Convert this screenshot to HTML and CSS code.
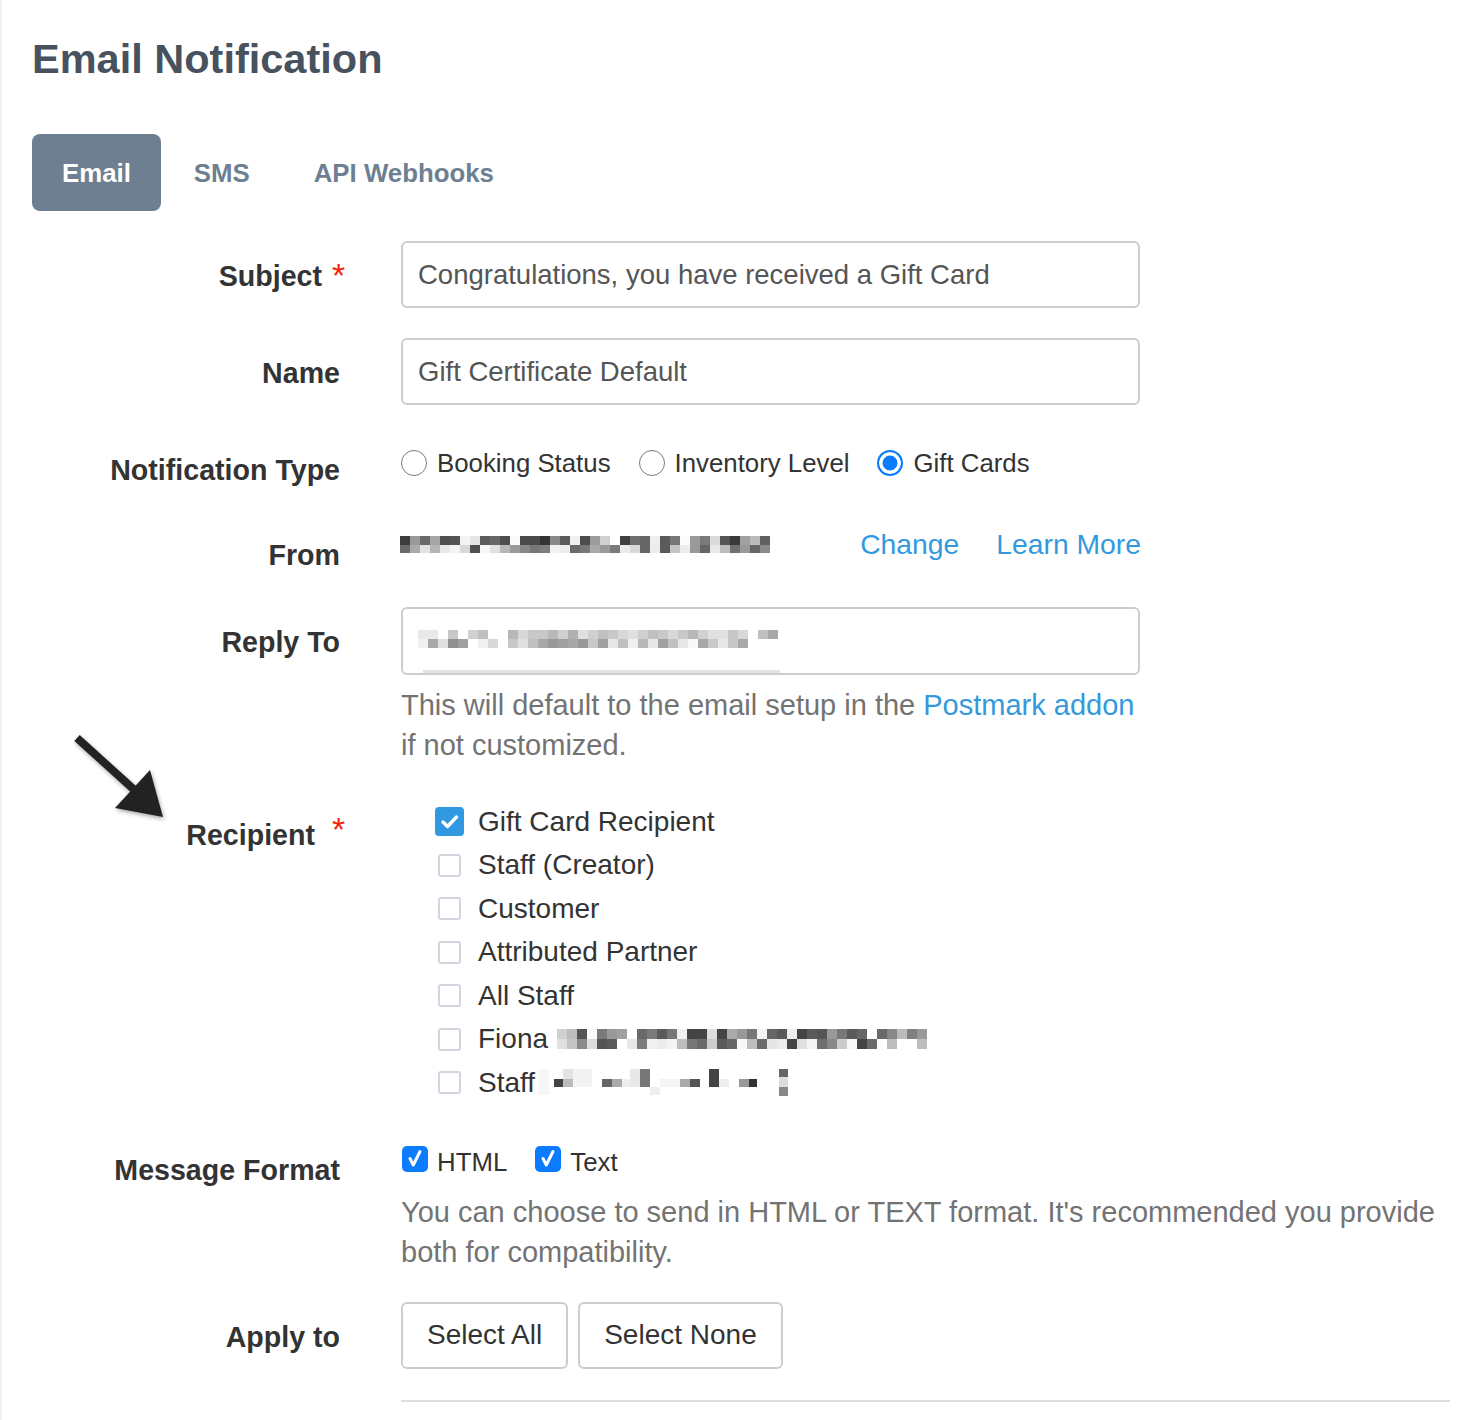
FILE: index.html
```html
<!DOCTYPE html>
<html lang="en">
<head>
<meta charset="utf-8">
<title>Email Notification</title>
<link rel="stylesheet" href="styles.css">
</head>
<body>
<div class="page">
  <h1 class="title">Email Notification</h1>

  <nav class="tabs">
    <a class="tab active">Email</a>
    <a class="tab">SMS</a>
    <a class="tab">API Webhooks</a>
  </nav>

  <svg class="arrow" width="120" height="105" viewBox="0 0 120 105">
    <line x1="17" y1="13" x2="80" y2="70" stroke="#222" stroke-width="8"/>
    <polygon points="90,45 55,83 103,92" fill="#222"/>
  </svg>

  <form class="form">
    <div class="row">
      <label class="lbl req-subject">Subject<span class="star">*</span></label>
      <div class="ctl"><input class="input" type="text" value="Congratulations, you have received a Gift Card"></div>
    </div>

    <div class="row">
      <label class="lbl">Name</label>
      <div class="ctl"><input class="input" type="text" value="Gift Certificate Default"></div>
    </div>

    <div class="row">
      <label class="lbl">Notification Type</label>
      <div class="ctl radios">
        <span class="opt"><span class="rad"></span>Booking Status</span>
        <span class="opt"><span class="rad"></span>Inventory Level</span>
        <span class="opt"><span class="rad on"></span>Gift Cards</span>
      </div>
    </div>

    <div class="row row-from">
      <label class="lbl">From</label>
      <div class="ctl from">
        <svg class="blur blur-from" width="370" height="17" shape-rendering="crispEdges">
          <g>
            <rect x="0" fill="#3d3d3d"/><rect x="10" fill="#9a9a9a"/><rect x="20" fill="#6a6a6a"/><rect x="30" fill="#a5a5a5"/><rect x="40" fill="#505050"/><rect x="50" fill="#555"/><rect x="60" fill="#f4f4f4"/><rect x="70" fill="#e6e6e6"/><rect x="80" fill="#5c5c5c"/><rect x="90" fill="#666"/><rect x="100" fill="#4e4e4e"/><rect x="110" fill="#fafafa"/><rect x="120" fill="#4a4a4a"/><rect x="130" fill="#4a4a4a"/><rect x="140" fill="#333"/><rect x="150" fill="#8a8a8a"/><rect x="160" fill="#5a5a5a"/><rect x="170" fill="#f0f0f0"/><rect x="180" fill="#4d4d4d"/><rect x="190" fill="#9c9c9c"/><rect x="200" fill="#d0d0d0"/><rect x="210" fill="#fff"/><rect x="220" fill="#3f3f3f"/><rect x="230" fill="#707070"/><rect x="240" fill="#666"/><rect x="250" fill="#eee"/><rect x="260" fill="#5a5a5a"/><rect x="270" fill="#777"/><rect x="280" fill="#fbfbfb"/><rect x="290" fill="#9a9a9a"/><rect x="300" fill="#7a7a7a"/><rect x="310" fill="#dadada"/><rect x="320" fill="#555"/><rect x="330" fill="#3a3a3a"/><rect x="340" fill="#a0a0a0"/><rect x="350" fill="#bbb"/><rect x="360" fill="#606060"/>
          </g>
          <g transform="translate(0,9)">
            <rect x="0" fill="#6a6a6a"/><rect x="10" fill="#a9a9a9"/><rect x="20" fill="#e2e2e2"/><rect x="30" fill="#b5b5b5"/><rect x="40" fill="#e8e8e8"/><rect x="50" fill="#f4f4f4"/><rect x="60" fill="#d8d8d8"/><rect x="70" fill="#505050"/><rect x="80" fill="#f7f7f7"/><rect x="90" fill="#e0e0e0"/><rect x="100" fill="#b8b8b8"/><rect x="110" fill="#9a9a9a"/><rect x="120" fill="#888"/><rect x="130" fill="#777"/><rect x="140" fill="#7d7d7d"/><rect x="150" fill="#f2f2f2"/><rect x="160" fill="#ededed"/><rect x="170" fill="#6a6a6a"/><rect x="180" fill="#777"/><rect x="190" fill="#aaa"/><rect x="200" fill="#999"/><rect x="210" fill="#7a7a7a"/><rect x="220" fill="#ebebeb"/><rect x="230" fill="#d9d9d9"/><rect x="240" fill="#666"/><rect x="250" fill="#ededed"/><rect x="260" fill="#5a5a5a"/><rect x="270" fill="#c4c4c4"/><rect x="280" fill="#ececec"/><rect x="290" fill="#999"/><rect x="300" fill="#666"/><rect x="310" fill="#e8e8e8"/><rect x="320" fill="#bbb"/><rect x="330" fill="#6f6f6f"/><rect x="340" fill="#999"/><rect x="350" fill="#666"/><rect x="360" fill="#8a8a8a"/>
          </g>
        </svg>
        <span class="links"><a href="#">Change</a><a href="#">Learn More</a></span>
      </div>
    </div>

    <div class="row">
      <label class="lbl">Reply To</label>
      <div class="ctl">
        <div class="input fake">
          <svg class="blur blur-reply" width="360" height="18" shape-rendering="crispEdges">
            <g>
              <rect x="0" fill="#e8e8e8"/><rect x="10" fill="#e8e8e8"/><rect x="20" fill="#fff"/><rect x="30" fill="#c8c8c8"/><rect x="40" fill="#fff"/><rect x="50" fill="#d0d0d0"/><rect x="60" fill="#c0c0c0"/><rect x="70" fill="#fff"/><rect x="80" fill="#fff"/><rect x="90" fill="#b8b8b8"/><rect x="100" fill="#d8d8d8"/><rect x="110" fill="#c8c8c8"/><rect x="120" fill="#c8c8c8"/><rect x="130" fill="#b8b8b8"/><rect x="140" fill="#d0d0d0"/><rect x="150" fill="#b0b0b0"/><rect x="160" fill="#e0e0e0"/><rect x="170" fill="#d0d0d0"/><rect x="180" fill="#c0c0c0"/><rect x="190" fill="#c8c8c8"/><rect x="200" fill="#d8d8d8"/><rect x="210" fill="#e0e0e0"/><rect x="220" fill="#d0d0d0"/><rect x="230" fill="#c0c0c0"/><rect x="240" fill="#c8c8c8"/><rect x="250" fill="#d8d8d8"/><rect x="260" fill="#c8c8c8"/><rect x="270" fill="#b8b8b8"/><rect x="280" fill="#d0d0d0"/><rect x="290" fill="#e0e0e0"/><rect x="300" fill="#e0e0e0"/><rect x="310" fill="#c8c8c8"/><rect x="320" fill="#d8d8d8"/><rect x="330" fill="#fff"/><rect x="340" fill="#c0c0c0"/><rect x="350" fill="#a8a8a8"/>
            </g>
            <g transform="translate(0,9)">
              <rect x="0" fill="#f0f0f0"/><rect x="10" fill="#a8a8a8"/><rect x="20" fill="#e0e0e0"/><rect x="30" fill="#909090"/><rect x="40" fill="#a0a0a0"/><rect x="50" fill="#fff"/><rect x="60" fill="#f0f0f0"/><rect x="70" fill="#d8d8d8"/><rect x="80" fill="#fff"/><rect x="90" fill="#c8c8c8"/><rect x="100" fill="#e0e0e0"/><rect x="110" fill="#c0c0c0"/><rect x="120" fill="#a8a8a8"/><rect x="130" fill="#989898"/><rect x="140" fill="#a0a0a0"/><rect x="150" fill="#a8a8a8"/><rect x="160" fill="#989898"/><rect x="170" fill="#c8c8c8"/><rect x="180" fill="#a0a0a0"/><rect x="190" fill="#e8e8e8"/><rect x="200" fill="#c0c0c0"/><rect x="210" fill="#f0f0f0"/><rect x="220" fill="#b8b8b8"/><rect x="230" fill="#e8e8e8"/><rect x="240" fill="#a0a0a0"/><rect x="250" fill="#c0c0c0"/><rect x="260" fill="#e8e8e8"/><rect x="270" fill="#f8f8f8"/><rect x="280" fill="#a8a8a8"/><rect x="290" fill="#c8c8c8"/><rect x="300" fill="#e8e8e8"/><rect x="310" fill="#c8c8c8"/><rect x="320" fill="#a8a8a8"/><rect x="330" fill="#fff"/><rect x="340" fill="#fff"/><rect x="350" fill="#fff"/>
            </g>
          </svg>
          <span class="autofill-bar"></span>
        </div>
        <p class="help">This will default to the email setup in the <a href="#">Postmark addon</a> if not customized.</p>
      </div>
    </div>

    <div class="row">
      <label class="lbl req-recipient">Recipient<span class="star">*</span></label>
      <div class="ctl checks">
        <div class="citem"><span class="cslot"><span class="cb on"><svg width="29" height="29" viewBox="0 0 29 29"><path d="M8 15 L12.5 19.5 L21.5 10" fill="none" stroke="#fff" stroke-width="3.4" stroke-linecap="round" stroke-linejoin="round"/></svg></span></span>Gift Card Recipient</div>
        <div class="citem"><span class="cslot"><span class="cb"></span></span>Staff (Creator)</div>
        <div class="citem"><span class="cslot"><span class="cb"></span></span>Customer</div>
        <div class="citem"><span class="cslot"><span class="cb"></span></span>Attributed Partner</div>
        <div class="citem"><span class="cslot"><span class="cb"></span></span>All Staff</div>
        <div class="citem"><span class="cslot"><span class="cb"></span></span>Fiona
          <svg class="blur blur-fiona" width="371" height="21" shape-rendering="crispEdges">
            <g>
              <rect x="0" fill="#d0d0d0"/><rect x="10" fill="#bdbdbd"/><rect x="20" fill="#555"/><rect x="30" fill="#f8f8f8"/><rect x="40" fill="#7a7a7a"/><rect x="50" fill="#999"/><rect x="60" fill="#a0a0a0"/><rect x="70" fill="#fff"/><rect x="80" fill="#6a6a6a"/><rect x="90" fill="#7a7a7a"/><rect x="100" fill="#5a5a5a"/><rect x="110" fill="#777"/><rect x="120" fill="#f0f0f0"/><rect x="130" fill="#444"/><rect x="140" fill="#444"/><rect x="150" fill="#ddd"/><rect x="160" fill="#444"/><rect x="170" fill="#aaa"/><rect x="180" fill="#999"/><rect x="190" fill="#777"/><rect x="200" fill="#f4f4f4"/><rect x="210" fill="#666"/><rect x="220" fill="#5a5a5a"/><rect x="230" fill="#eee"/><rect x="240" fill="#444"/><rect x="250" fill="#5a5a5a"/><rect x="260" fill="#555"/><rect x="270" fill="#999"/><rect x="280" fill="#777"/><rect x="290" fill="#5a5a5a"/><rect x="300" fill="#666"/><rect x="310" fill="#fff"/><rect x="320" fill="#6a6a6a"/><rect x="330" fill="#888"/><rect x="340" fill="#bbb"/><rect x="350" fill="#808080"/><rect x="360" fill="#9a9a9a"/>
            </g>
            <g transform="translate(0,10)">
              <rect x="0" fill="#e0e0e0"/><rect x="10" fill="#c4c4c4"/><rect x="20" fill="#8a8a8a"/><rect x="30" fill="#ddd"/><rect x="40" fill="#555"/><rect x="50" fill="#5a5a5a"/><rect x="60" fill="#fff"/><rect x="70" fill="#e8e8e8"/><rect x="80" fill="#7a7a7a"/><rect x="90" fill="#f0f0f0"/><rect x="100" fill="#ececec"/><rect x="110" fill="#f4f4f4"/><rect x="120" fill="#bdbdbd"/><rect x="130" fill="#777"/><rect x="140" fill="#6a6a6a"/><rect x="150" fill="#ccc"/><rect x="160" fill="#5a5a5a"/><rect x="170" fill="#666"/><rect x="180" fill="#f8f8f8"/><rect x="190" fill="#bdbdbd"/><rect x="200" fill="#6a6a6a"/><rect x="210" fill="#e6e6e6"/><rect x="220" fill="#ececec"/><rect x="230" fill="#444"/><rect x="240" fill="#e0e0e0"/><rect x="250" fill="#f4f4f4"/><rect x="260" fill="#6f6f6f"/><rect x="270" fill="#888"/><rect x="280" fill="#ccc"/><rect x="290" fill="#f8f8f8"/><rect x="300" fill="#444"/><rect x="310" fill="#6a6a6a"/><rect x="320" fill="#fff"/><rect x="330" fill="#bdbdbd"/><rect x="340" fill="#fff"/><rect x="350" fill="#fff"/><rect x="360" fill="#bdbdbd"/>
            </g>
          </svg>
        </div>
        <div class="citem"><span class="cslot"><span class="cb"></span></span>Staff
          <svg class="blur-staff" width="252" height="28" shape-rendering="crispEdges">
            <rect x="2" y="0" width="10" height="26" fill="#f6f6f6"/>
            <rect x="17" y="10" width="9" height="8" fill="#444"/>
            <rect x="26" y="0" width="10" height="10" fill="#e4e4e4"/>
            <rect x="26" y="10" width="10" height="8" fill="#bbb"/>
            <rect x="36" y="0" width="19" height="18" fill="#f2f2f2"/>
            <rect x="65" y="10" width="10" height="8" fill="#666"/>
            <rect x="75" y="10" width="10" height="8" fill="#aaa"/>
            <rect x="85" y="10" width="8" height="8" fill="#eee"/>
            <rect x="93" y="0" width="10" height="18" fill="#e8e8e8"/>
            <rect x="103" y="0" width="10" height="18" fill="#777"/>
            <rect x="113" y="18" width="10" height="8" fill="#eee"/>
            <rect x="123" y="10" width="20" height="8" fill="#f4f4f4"/>
            <rect x="143" y="10" width="10" height="8" fill="#aaa"/>
            <rect x="153" y="10" width="10" height="8" fill="#555"/>
            <rect x="172" y="0" width="10" height="18" fill="#444"/>
            <rect x="182" y="10" width="10" height="8" fill="#eee"/>
            <rect x="202" y="10" width="10" height="8" fill="#999"/>
            <rect x="212" y="10" width="8" height="8" fill="#333"/>
            <rect x="242" y="0" width="9" height="8" fill="#666"/>
            <rect x="242" y="8" width="9" height="10" fill="#ddd"/>
            <rect x="242" y="18" width="9" height="9" fill="#888"/>
          </svg>
        </div>
      </div>
    </div>

    <div class="row">
      <label class="lbl">Message Format</label>
      <div class="ctl">
        <div class="fmt">
          <span class="fopt"><span class="nat"><svg width="26" height="26" viewBox="0 0 26 26"><path d="M8 12.5 L11.3 19 L18 5.5" fill="none" stroke="#fff" stroke-width="3" stroke-linecap="round" stroke-linejoin="round"/></svg></span>HTML</span>
          <span class="fopt"><span class="nat"><svg width="26" height="26" viewBox="0 0 26 26"><path d="M8 12.5 L11.3 19 L18 5.5" fill="none" stroke="#fff" stroke-width="3" stroke-linecap="round" stroke-linejoin="round"/></svg></span>Text</span>
        </div>
        <p class="help wide">You can choose to send in HTML or TEXT format. It's recommended you provide both for compatibility.</p>
      </div>
    </div>

    <div class="row last">
      <label class="lbl">Apply to</label>
      <div class="ctl">
        <div class="btns">
          <button type="button" class="btn">Select All</button>
          <button type="button" class="btn">Select None</button>
        </div>
        <div class="rule"></div>
      </div>
    </div>
  </form>
</div>
</body>
</html>
```
FILE: styles.css
```css
* { box-sizing: border-box; }

html, body {
  margin: 0;
  background: #fff;
}

body {
  font-family: "Liberation Sans", Arial, Helvetica, sans-serif;
  color: #333;
}

.page {
  position: relative;
  min-height: 1420px;
  border-left: 2px solid #f1f1f1;
  padding: 36px 14px 0 30px;
}

.title {
  margin: 0;
  font-size: 41.5px;
  line-height: 46px;
  font-weight: 700;
  color: #47525e;
}

.tabs {
  display: flex;
  gap: 2px;
  margin-top: 52px;
}

.tab {
  height: 77px;
  line-height: 79px;
  padding: 0 31px;
  font-size: 25.8px;
  font-weight: 700;
  color: #6e7f91;
  border-radius: 8px;
}

.tab.active {
  background: #6e7f91;
  color: #fff;
  padding: 0 30px;
}

.arrow {
  position: absolute;
  left: 58px;
  top: 725px;
  filter: drop-shadow(1px 2px 2px rgba(0, 0, 0, 0.35));
}

.form {
  margin-top: 30px;
}

.row {
  display: grid;
  grid-template-columns: 308px 1049px;
  column-gap: 61px;
  margin-bottom: 30px;
}

.row-from { margin-bottom: 32px; }

.lbl {
  position: relative;
  text-align: right;
  font-weight: 700;
  font-size: 28.6px;
  line-height: 40px;
  padding-top: 15px;
  color: #333;
}

.req-subject { padding-right: 18px; }
.req-recipient { padding-right: 25px; padding-top: 20px; }

.star {
  position: absolute;
  left: 300px;
  top: 16.5px;
  font-size: 34px;
  line-height: 34px;
  font-weight: 400;
  color: #f5230a;
}

.input {
  display: block;
  width: 739px;
  height: 67px;
  border: 2px solid #cdcdcd;
  border-radius: 6px;
  padding: 0 15px;
  font-family: "Liberation Sans", Arial, sans-serif;
  font-size: 27.5px;
  color: #555;
  background: #fff;
  outline: none;
}

.fake {
  position: relative;
  height: 68px;
}

.blur rect {
  width: 10px;
  height: 9px;
}

.blur-fiona rect {
  height: 10px;
}

.blur-reply {
  position: absolute;
  left: 15px;
  top: 21px;
}

.autofill-bar {
  position: absolute;
  left: 20px;
  bottom: 0;
  width: 357px;
  height: 3px;
  background: #e4e4e4;
}

.radios {
  display: flex;
  gap: 28px;
  font-size: 25.8px;
  line-height: 40px;
  padding-top: 1px;
  color: #333;
}

.opt {
  display: flex;
  align-items: center;
  gap: 10px;
}

.rad {
  display: inline-block;
  width: 26px;
  height: 26px;
  border-radius: 50%;
  border: 1.5px solid #7a7a7a;
  background: #fff;
}

.rad.on {
  border: 2.5px solid #0b7bff;
  background: #0b7bff;
  box-shadow: inset 0 0 0 3.5px #fff;
}

.from {
  display: flex;
  align-items: flex-start;
  width: 740px;
  padding-top: 4px;
  font-size: 28.3px;
  line-height: 40px;
}

.blur-from {
  margin-top: 12px;
  margin-left: -1px;
}

.links {
  margin-left: auto;
  display: flex;
  gap: 37px;
}

a {
  color: #3399dd;
  text-decoration: none;
}

.help {
  margin: 10px 0 0;
  width: 739px;
  font-size: 29px;
  line-height: 40px;
  color: #737373;
}

.help.wide {
  width: auto;
}

.checks {
  padding: 5px 0 0 33px;
  font-size: 28px;
  color: #333;
}

.citem {
  display: flex;
  align-items: center;
  height: 43.5px;
  line-height: 40px;
}

.cslot {
  width: 30px;
  margin-right: 14px;
  display: flex;
  justify-content: center;
}

.cb {
  display: block;
  width: 23px;
  height: 23px;
  border: 2px solid #d6d4e0;
  border-radius: 3px;
}

.cb.on {
  width: 29px;
  height: 29px;
  border: none;
  border-radius: 4px;
  background: #3098e0;
}

.cb svg, .nat svg { display: block; }

.blur-fiona {
  margin-left: 9px;
  align-self: flex-start;
  margin-top: 11px;
}

.blur-staff {
  margin-left: 2px;
  align-self: flex-start;
  margin-top: 8px;
}

.fmt {
  display: flex;
  align-items: center;
  padding-top: 7px;
  font-size: 25.8px;
  line-height: 40px;
  color: #333;
}

.fopt {
  display: flex;
  align-items: center;
  gap: 9px;
}

.fopt + .fopt { margin-left: 27px; }

.nat {
  display: block;
  width: 26px;
  height: 26px;
  margin-left: 1px;
  margin-top: -5px;
  border-radius: 5px;
  background: #0b7bff;
}

.btns {
  display: flex;
  gap: 10px;
}

.btn {
  height: 67px;
  padding: 0 24px;
  border: 2px solid #cdcdcd;
  border-radius: 6px;
  background: #fff;
  font-family: "Liberation Sans", Arial, sans-serif;
  font-size: 28px;
  color: #333;
}

.rule {
  margin-top: 31px;
  height: 2px;
  background: #dedede;
}
```
